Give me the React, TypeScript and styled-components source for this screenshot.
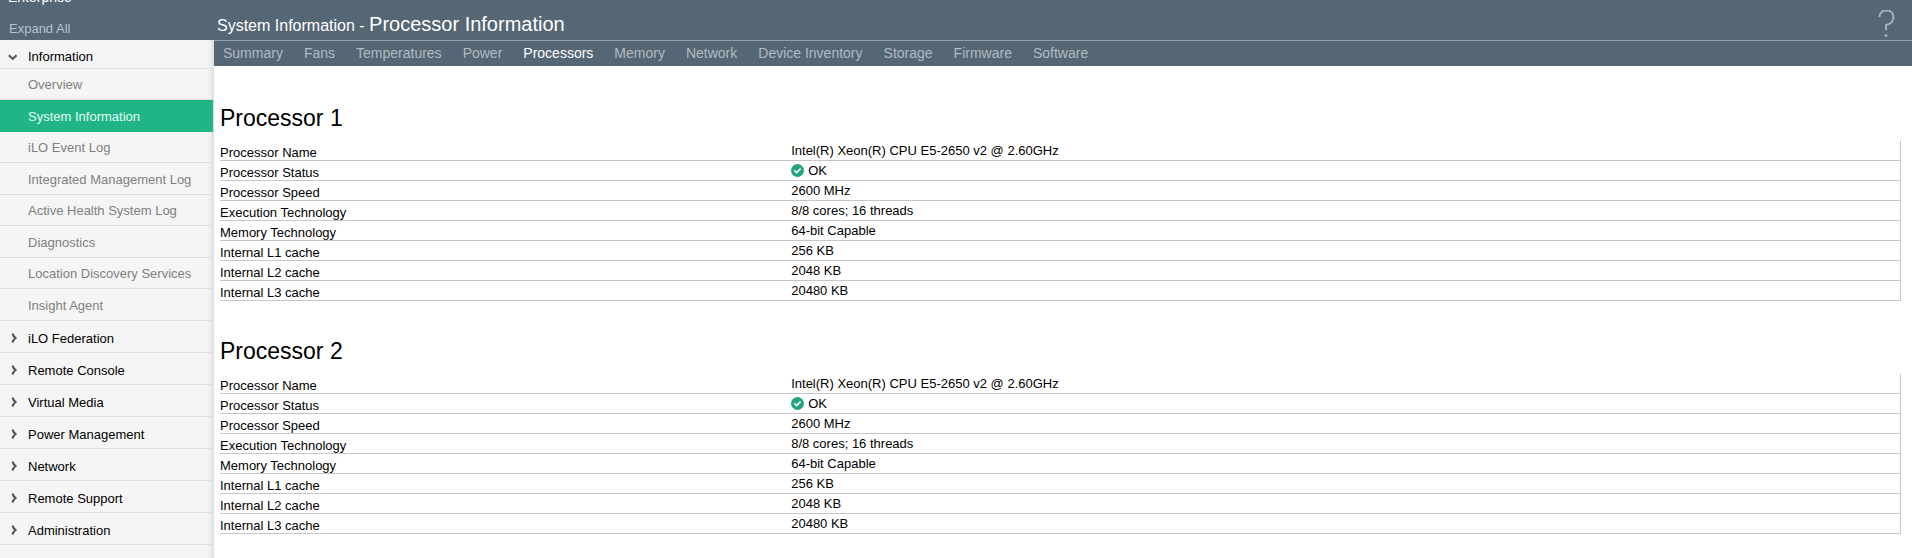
import React from "react";
import styled, { createGlobalStyle } from "styled-components";

const slate = "#556674";

const GlobalStyle = createGlobalStyle`
  *, *::before, *::after { box-sizing: border-box; }
  body {
    margin: 0;
    background: #fff;
    color: #000;
    font: 13px/16px "Liberation Sans", Arial, Helvetica, sans-serif;
  }
  a { color: inherit; text-decoration: none; }
  ul { list-style: none; margin: 0; padding: 0; }
`;

const Shell = styled.div`
  display: grid;
  grid-template-columns: 214px minmax(0, 1fr);
  min-height: 100vh;
`;

const Sidebar = styled.aside`
  background: linear-gradient(to left, #dcdcdc 0, #ececec 3px, #f5f5f5 8px);
`;

const SidebarTop = styled.div`
  display: flex;
  flex-direction: column;
  justify-content: flex-end;
  height: 40px;
  overflow: hidden;
  background: ${slate};
`;

const Brand = styled.span`
  flex: none;
  padding-left: 8px;
  color: #fff;
  font-size: 14px;
  line-height: 16px;
`;

const ExpandButton = styled.button`
  flex: none;
  height: 35px;
  padding: 13px 9px 0;
  border: 0;
  background: none;
  color: #b9c4cb;
  font: inherit;
  font-size: 13px;
  line-height: 16px;
  text-align: left;
  cursor: pointer;
`;

const GroupButton = styled.button<{ $open?: boolean }>`
  display: flex;
  align-items: center;
  gap: 10px;
  width: 100%;
  height: ${(p) => (p.$open ? 29 : 32)}px;
  padding: ${(p) => (p.$open ? 5 : 4)}px 8px 0;
  border: 0;
  border-bottom: 1px solid #dedede;
  background: none;
  color: #000;
  font: inherit;
  text-align: left;
  cursor: pointer;
`;

const SubItem = styled.li`
  height: 31px;
  &:nth-child(even) { height: 32px; }
`;

const SubLink = styled.a<{ $active?: boolean }>`
  display: flex;
  align-items: center;
  height: 100%;
  padding-left: 28px;
  padding-top: 2px;
  margin-right: 1px;
  border-bottom: 1px solid ${(p) => (p.$active ? "#20b486" : "#dedede")};
  background: ${(p) => (p.$active ? "#20b486" : "transparent")};
  color: ${(p) => (p.$active ? "#e4fff5" : "#808080")};
`;

const Header = styled.header`
  display: flex;
  align-items: center;
  justify-content: space-between;
  height: 41px;
  padding: 9px 17px 0 3px;
  border-bottom: 1px solid #929fa8;
  background: ${slate};
  color: #fff;
`;

const Title = styled.h1`
  margin: 0;
  font-size: 16px;
  font-weight: 400;
  line-height: 24px;
`;

const TitlePage = styled.span`
  font-size: 20px;
`;

const HelpButton = styled.button`
  display: block;
  height: 30px;
  padding: 0;
  border: 0;
  background: none;
  color: #a3b0b9;
  cursor: pointer;
`;

const Tabs = styled.nav`
  display: flex;
  gap: 21px;
  height: 25px;
  padding: 4px 9px 0;
  background: ${slate};
`;

const Tab = styled.a<{ $active?: boolean }>`
  color: ${(p) => (p.$active ? "#fff" : "#b1bbc2")};
  font-size: 14px;
  line-height: 16px;
  white-space: nowrap;
`;

const Content = styled.main`
  display: flex;
  flex-direction: column;
  gap: 36px;
  padding: 38px 11px 16px 6px;
`;

const SectionTitle = styled.h2`
  margin: 0 0 9px;
  font-size: 23px;
  font-weight: 400;
  line-height: 28px;
`;

const SpecTable = styled.table`
  width: 100%;
  border-collapse: separate;
  border-spacing: 0;
  border-right: 1px solid #c6c6c6;
  line-height: 15px;
  table-layout: fixed;
`;

const SpecLabel = styled.th`
  width: 34%;
  height: 20px;
  padding: 4px 0 0;
  border-bottom: 1px solid #c6c6c6;
  font-weight: 400;
  text-align: left;
`;

const SpecValue = styled.td`
  height: 20px;
  padding: 0;
  border-bottom: 1px solid #c6c6c6;
`;

const Status = styled.span`
  display: flex;
  align-items: center;
  gap: 4px;
`;

const ChevronRight = () => (
  <svg width="10" height="12" viewBox="0 0 10 12" fill="none" stroke="#555" strokeWidth="2" aria-hidden="true">
    <path d="M4.5 0.4 Q5.2 3.2 7.6 5 Q5.2 6.8 4.5 9.6" />
  </svg>
);

const ChevronDown = () => (
  <svg width="10" height="12" viewBox="0 0 10 12" fill="none" stroke="#555" strokeWidth="2" aria-hidden="true">
    <path d="M0.8 4.2 L4.7 7.8 L8.6 4.2" />
  </svg>
);

const OkIcon = () => (
  <svg width="13" height="13" viewBox="0 0 13 13" aria-hidden="true">
    <circle cx="6.5" cy="6.5" r="6.5" fill="#22a57f" />
    <path d="M3.4 6.4 L5.6 8.5 L9.6 4.6" fill="none" stroke="#fff" strokeWidth="1.7" />
  </svg>
);

const HelpIcon = () => (
  <svg width="17" height="30" viewBox="0 0 17 30" fill="none" stroke="currentColor" strokeWidth="2" aria-hidden="true">
    <path d="M1.4 7.3 C1.4 3 4.4 0.6 8.3 0.6 C12.6 0.6 15.4 3.3 15.4 7.3 C15.4 11.5 12.5 14.4 8 15.2 V20.5" transform="translate(0 -0.2)" />
    <circle cx="8" cy="25.5" r="1.5" fill="currentColor" stroke="none" />
  </svg>
);

const infoItems = [
  "Overview",
  "System Information",
  "iLO Event Log",
  "Integrated Management Log",
  "Active Health System Log",
  "Diagnostics",
  "Location Discovery Services",
  "Insight Agent",
];

const groups = [
  "iLO Federation",
  "Remote Console",
  "Virtual Media",
  "Power Management",
  "Network",
  "Remote Support",
  "Administration",
];

const tabs = [
  "Summary",
  "Fans",
  "Temperatures",
  "Power",
  "Processors",
  "Memory",
  "Network",
  "Device Inventory",
  "Storage",
  "Firmware",
  "Software",
];

type Processor = { name: string; specs: [string, string][] };

const specs: [string, string][] = [
  ["Processor Name", "Intel(R) Xeon(R) CPU E5-2650 v2 @ 2.60GHz"],
  ["Processor Status", "OK"],
  ["Processor Speed", "2600 MHz"],
  ["Execution Technology", "8/8 cores; 16 threads"],
  ["Memory Technology", "64-bit Capable"],
  ["Internal L1 cache", "256 KB"],
  ["Internal L2 cache", "2048 KB"],
  ["Internal L3 cache", "20480 KB"],
];

const processors: Processor[] = [
  { name: "Processor 1", specs },
  { name: "Processor 2", specs },
];

function ProcessorSection({ name, specs }: Processor) {
  return (
    <section>
      <SectionTitle>{name}</SectionTitle>
      <SpecTable aria-label={name}>
        <tbody>
          {specs.map(([label, value]) => (
            <tr key={label}>
              <SpecLabel scope="row">{label}</SpecLabel>
              <SpecValue>
                {label === "Processor Status" ? (
                  <Status>
                    <OkIcon />
                    {value}
                  </Status>
                ) : (
                  value
                )}
              </SpecValue>
            </tr>
          ))}
        </tbody>
      </SpecTable>
    </section>
  );
}

export default function App() {
  return (
    <>
      <GlobalStyle />
      <Shell>
        <Sidebar>
          <SidebarTop>
            <Brand>Enterprise</Brand>
            <ExpandButton type="button">Expand All</ExpandButton>
          </SidebarTop>
          <nav aria-label="Main">
            <ul>
              <li>
                <GroupButton type="button" $open aria-expanded="true">
                  <ChevronDown />
                  Information
                </GroupButton>
                <ul>
                  {infoItems.map((item) => (
                    <SubItem key={item}>
                      <SubLink href="#" $active={item === "System Information"}>
                        {item}
                      </SubLink>
                    </SubItem>
                  ))}
                </ul>
              </li>
              {groups.map((group) => (
                <li key={group}>
                  <GroupButton type="button" aria-expanded="false">
                    <ChevronRight />
                    {group}
                  </GroupButton>
                </li>
              ))}
            </ul>
          </nav>
        </Sidebar>
        <div>
          <Header>
            <Title>
              System Information - <TitlePage>Processor Information</TitlePage>
            </Title>
            <HelpButton type="button" aria-label="Help">
              <HelpIcon />
            </HelpButton>
          </Header>
          <Tabs aria-label="System information">
            {tabs.map((tab) => (
              <Tab key={tab} href="#" $active={tab === "Processors"}>
                {tab}
              </Tab>
            ))}
          </Tabs>
          <Content>
            {processors.map((p) => (
              <ProcessorSection key={p.name} {...p} />
            ))}
          </Content>
        </div>
      </Shell>
    </>
  );
}
